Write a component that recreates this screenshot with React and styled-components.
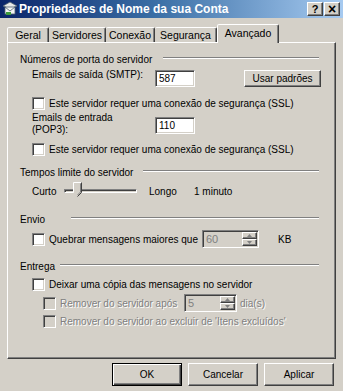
import styled, { createGlobalStyle } from "styled-components";

const GlobalStyle = createGlobalStyle`
  html, body {
    margin: 0;
    padding: 0;
    background: #d4d0c8;
  }
  body {
    font-family: "Liberation Sans", Arial, sans-serif;
    font-size: 10px;
    color: #000;
  }
`;

const sunken = `
  border: 1px solid;
  border-color: #808080 #ffffff #ffffff #808080;
  box-shadow: inset 1px 1px 0 #404040, inset -1px -1px 0 #d4d0c8;
`;

const raised = `
  border: 1px solid;
  border-color: #ffffff #404040 #404040 #ffffff;
  box-shadow: inset -1px -1px 0 #808080, inset 1px 1px 0 #d4d0c8;
`;

const tabs = [
  { label: "Geral", w: 42 },
  { label: "Servidores", w: 57 },
  { label: "Conexão", w: 49 },
  { label: "Segurança", w: 62 },
  { label: "Avançado", w: 62, active: true },
];

export default function App() {
  return (
    <>
      <GlobalStyle />
      <Window>
        <TitleBar>
          <AppIcon />
          <Title>Propriedades de Nome da sua Conta</Title>
          <CaptionButtons>
            <CaptionButton>?</CaptionButton>
            <CaptionButton $close>×</CaptionButton>
          </CaptionButtons>
        </TitleBar>

        <Body>
          <TabRow>
            {tabs.map((t) => (
              <Tab key={t.label} $w={t.w} $active={t.active}>
                {t.label}
              </Tab>
            ))}
          </TabRow>

          <Panel>
            <GroupHeader $mt={9} $gap={11}>
              <span>Números de porta do servidor</span>
              <Rule />
            </GroupHeader>
            <FieldRow $mt={3}>
              <FieldLabel>Emails de saída (SMTP):</FieldLabel>
              <TextBox>587</TextBox>
              <PushButton $ml={49}>Usar padrões</PushButton>
            </FieldRow>
            <CheckRow $mt={9} $ml={12}>
              <CheckBox />
              <span>Este servidor requer uma conexão de segurança (SSL)</span>
            </CheckRow>
            <FieldRow $mt={2}>
              <FieldLabel $twoLines>
                Emails de entrada
                <br />
                (POP3):
              </FieldLabel>
              <TextBox $mt={5}>110</TextBox>
            </FieldRow>
            <CheckRow $mt={6} $ml={12}>
              <CheckBox />
              <span>Este servidor requer uma conexão de segurança (SSL)</span>
            </CheckRow>

            <GroupHeader $mt={9} $gap={10}>
              <span>Tempos limite do servidor</span>
              <Rule />
            </GroupHeader>
            <SliderRow>
              <SliderLabel $w={32}>Curto</SliderLabel>
              <Slider>
                <SliderThumb viewBox="0 0 9 15">
                  <path d="M0.5 0.5 H8.5 V10.5 L4.5 14.5 L0.5 10.5 Z" fill="#d4d0c8" />
                  <path d="M0.5 10.5 V0.5 H8.5" fill="none" stroke="#fff" />
                  <path d="M8.5 0.5 V10.5 L4.5 14.5" fill="none" stroke="#404040" />
                  <path d="M7.5 1.5 V10 L4.5 13" fill="none" stroke="#808080" />
                </SliderThumb>
              </Slider>
              <SliderLabel $w={45} $ml={12}>
                Longo
              </SliderLabel>
              <span>1 minuto</span>
            </SliderRow>

            <GroupHeader $mt={12} $gap={26}>
              <span>Envio</span>
              <Rule />
            </GroupHeader>
            <CheckRow $mt={4} $ml={12} $h={18}>
              <CheckBox />
              <CheckLabel $w={153}>Quebrar mensagens maiores que</CheckLabel>
              <Spinner $w={57} value="60" />
              <Unit $ml={19}>KB</Unit>
            </CheckRow>

            <GroupHeader $mt={11} $gap={5}>
              <span>Entrega</span>
              <Rule />
            </GroupHeader>
            <CheckRow $mt={4} $ml={12}>
              <CheckBox />
              <span>Deixar uma cópia das mensagens no servidor</span>
            </CheckRow>
            <CheckRow $mt={3} $ml={23} $h={18} $disabled>
              <CheckBox $disabled />
              <CheckLabel $w={124}>Remover do servidor após</CheckLabel>
              <Spinner $w={53} value="5" />
              <Unit $ml={3}>dia(s)</Unit>
            </CheckRow>
            <CheckRow $mt={2} $ml={23} $disabled>
              <CheckBox $disabled />
              <span>Remover do servidor ao excluir de 'Itens excluídos'</span>
            </CheckRow>
          </Panel>

          <ButtonRow>
            <DialogButton $default>OK</DialogButton>
            <DialogButton>Cancelar</DialogButton>
            <DialogButton>Aplicar</DialogButton>
          </ButtonRow>
        </Body>
      </Window>
    </>
  );
}

function AppIcon() {
  return (
    <IconSvg viewBox="0 0 16 16">
      <path d="M1 5 L8 1 L15 5 L8 8 Z" fill="#e8e8e8" stroke="#506070" strokeWidth="0.8" />
      <rect x="3" y="6" width="10" height="7" fill="#f4f4f4" stroke="#506070" strokeWidth="0.8" />
      <path d="M3 6 L8 10 L13 6" fill="none" stroke="#506070" strokeWidth="0.8" />
      <rect x="4" y="11" width="5" height="3" fill="#3c9a3c" />
    </IconSvg>
  );
}

function Spinner({ value, $w }) {
  return (
    <SpinBox $w={$w}>
      <SpinValue>{value}</SpinValue>
      <SpinButtons>
        <SpinArrow>
          <svg width="5" height="3" viewBox="0 0 5 3">
            <path d="M2.5 0 L5 3 H0 Z" fill="#808080" />
          </svg>
        </SpinArrow>
        <SpinArrow>
          <svg width="5" height="3" viewBox="0 0 5 3">
            <path d="M0 0 H5 L2.5 3 Z" fill="#808080" />
          </svg>
        </SpinArrow>
      </SpinButtons>
    </SpinBox>
  );
}

const Window = styled.div`
  width: 343px;
  height: 391px;
  display: flex;
  flex-direction: column;
  background: #d4d0c8;
  overflow: hidden;
`;

const TitleBar = styled.div`
  height: 18px;
  display: flex;
  align-items: center;
  padding: 0 3px 0 2px;
  background: linear-gradient(to right, #0a246a 0%, #3a6ea5 45%, #a6caf0 100%);
`;

const IconSvg = styled.svg`
  width: 16px;
  height: 16px;
  flex: none;
`;

const Title = styled.div`
  margin-left: 1px;
  color: #fff;
  font-weight: bold;
  font-size: 12px;
  white-space: nowrap;
`;

const CaptionButtons = styled.div`
  margin-left: auto;
  display: flex;
  gap: 1px;
`;

const CaptionButton = styled.div`
  ${raised}
  width: 14px;
  height: 12px;
  background: #d4d0c8;
  display: flex;
  align-items: center;
  justify-content: center;
  font-weight: bold;
  font-size: ${(p) => (p.$close ? "14px" : "11px")};
  line-height: 1;
  color: #000;
`;

const Body = styled.div`
  padding: 6px 7px 0 7px;
  display: flex;
  flex-direction: column;
`;

const TabRow = styled.div`
  height: 18px;
  display: flex;
  align-items: flex-end;
  position: relative;
  z-index: 1;
`;

const Tab = styled.div`
  width: ${(p) => p.$w}px;
  height: ${(p) => (p.$active ? "19px" : "15px")};
  padding-top: ${(p) => (p.$active ? "2px" : "0")};
  margin-bottom: ${(p) => (p.$active ? "-1px" : "0")};
  display: flex;
  justify-content: center;
  align-items: ${(p) => (p.$active ? "flex-start" : "center")};
  box-sizing: border-box;
  background: #d4d0c8;
  border: 1px solid;
  border-bottom: none;
  border-color: #ffffff #404040 transparent #ffffff;
  border-left-width: ${(p) => (p.$active ? "1px" : "0")};
  border-radius: 2px 2px 0 0;
  box-shadow: inset -1px 0 0 #808080;
  white-space: nowrap;
  font-size: 10.5px;
  line-height: 13px;
  &:first-child {
    border-left-width: 1px;
  }
`;

const Panel = styled.div`
  height: 317px;
  box-sizing: border-box;
  display: flex;
  flex-direction: column;
  padding: 0 0 0 12px;
  border: 1px solid;
  border-color: #ffffff #404040 #404040 #ffffff;
  box-shadow: inset -1px -1px 0 #808080;
`;

const GroupHeader = styled.div`
  margin-top: ${(p) => p.$mt}px;
  height: 14px;
  display: flex;
  align-items: center;
  padding-right: 16px;
  span {
    white-space: nowrap;
    margin-right: ${(p) => p.$gap}px;
  }
`;

const Rule = styled.div`
  flex: 1;
  height: 0;
  margin-top: -2px;
  border-top: 1px solid #808080;
  border-bottom: 1px solid #ffffff;
`;

const FieldRow = styled.div`
  margin-top: ${(p) => p.$mt}px;
  margin-left: 12px;
  display: flex;
  align-items: flex-start;
`;

const FieldLabel = styled.div`
  width: 123px;
  flex: none;
  line-height: 12px;
`;

const TextBox = styled.div`
  ${sunken}
  margin-top: ${(p) => p.$mt || 1}px;
  width: 40px;
  height: 17px;
  box-sizing: border-box;
  background: #fff;
  padding: 2px 3px 0;
  line-height: 12px;
`;

const PushButton = styled.div`
  ${raised}
  margin-left: ${(p) => p.$ml}px;
  width: 77px;
  height: 17px;
  margin-top: 1px;
  box-sizing: border-box;
  display: flex;
  align-items: center;
  justify-content: center;
  background: #d4d0c8;
`;

const CheckRow = styled.div`
  margin-top: ${(p) => p.$mt}px;
  margin-left: ${(p) => p.$ml}px;
  height: ${(p) => p.$h || 14}px;
  display: flex;
  align-items: center;
  white-space: nowrap;
  color: ${(p) => (p.$disabled ? "#808080" : "#000")};
  text-shadow: ${(p) => (p.$disabled ? "1px 1px 0 #ffffff" : "none")};
`;

const CheckLabel = styled.span`
  width: ${(p) => p.$w}px;
  flex: none;
`;

const CheckBox = styled.div`
  ${sunken}
  width: 13px;
  height: 13px;
  box-sizing: border-box;
  flex: none;
  margin-right: 4px;
  background: ${(p) => (p.$disabled ? "#d4d0c8" : "#ffffff")};
`;

const SliderRow = styled.div`
  margin-top: 3px;
  margin-left: 12px;
  height: 18px;
  display: flex;
  align-items: center;
`;

const SliderLabel = styled.span`
  width: ${(p) => p.$w}px;
  margin-left: ${(p) => p.$ml || 0}px;
  flex: none;
`;

const Slider = styled.div`
  position: relative;
  width: 73px;
  height: 4px;
  box-sizing: border-box;
  ${sunken}
`;

const SliderThumb = styled.svg`
  position: absolute;
  left: 8px;
  top: -8px;
  width: 9px;
  height: 15px;
`;

const SpinBox = styled.div`
  ${sunken}
  width: ${(p) => p.$w}px;
  height: 18px;
  box-sizing: border-box;
  display: flex;
  background: #d4d0c8;
  padding: 1px;
`;

const SpinValue = styled.div`
  flex: 1;
  padding: 1px 2px 0;
  line-height: 13px;
  font-size: 11px;
  color: #808080;
  text-shadow: none;
`;

const SpinButtons = styled.div`
  width: 15px;
  display: flex;
  flex-direction: column;
`;

const SpinArrow = styled.div`
  ${raised}
  flex: 1;
  box-sizing: border-box;
  display: flex;
  align-items: center;
  justify-content: center;
  background: #d4d0c8;
`;

const Unit = styled.span`
  margin-left: ${(p) => p.$ml}px;
`;

const ButtonRow = styled.div`
  margin-top: 4px;
  display: flex;
  justify-content: flex-end;
  gap: 6px;
  padding-right: 2px;
`;

const DialogButton = styled.div`
  ${raised}
  width: 70px;
  height: 23px;
  box-sizing: border-box;
  display: flex;
  align-items: center;
  justify-content: center;
  background: #d4d0c8;
  ${(p) =>
    p.$default &&
    `
    border-color: #000;
    box-shadow: inset 1px 1px 0 #fff, inset -1px -1px 0 #404040, inset -2px -2px 0 #808080;
  `}
`;
